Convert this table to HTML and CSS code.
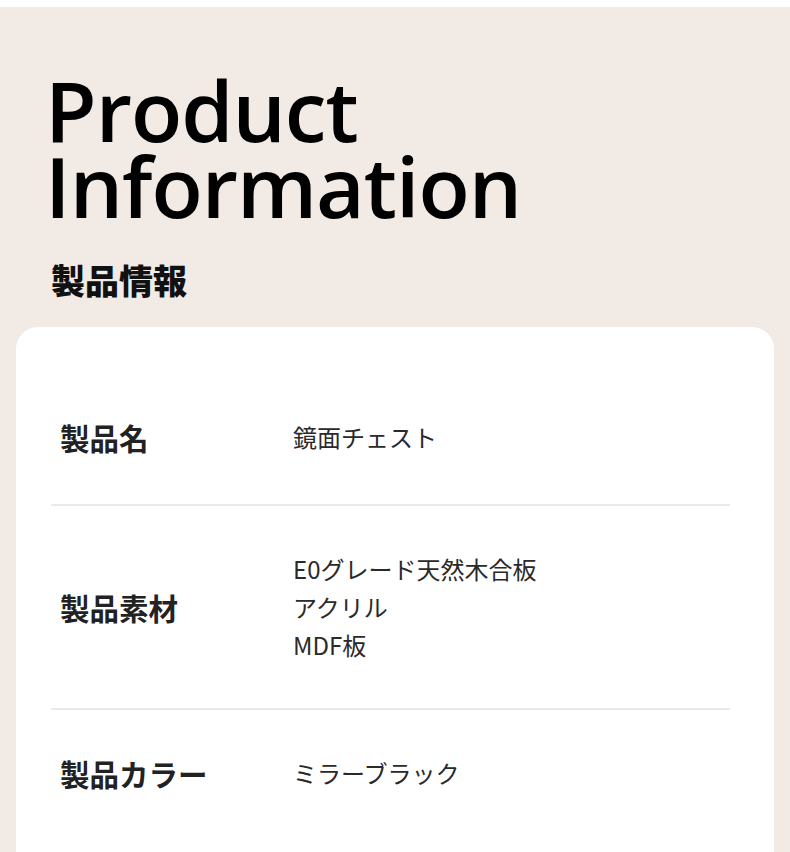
FILE: index.html
```html
<!DOCTYPE html>
<html lang="ja">
<head>
<meta charset="utf-8">
<link rel="stylesheet" href="styles.css">
</head>
<body>
<div class="page">
  <h1 class="title">Product<br>Information</h1>
  <h2 class="subtitle">製品情報</h2>
  <div class="card">
    <div class="row first">
      <div class="label">製品名</div>
      <div class="value">鏡面チェスト</div>
    </div>
    <div class="row">
      <div class="label">製品素材</div>
      <div class="value">E0グレード天然木合板<br>アクリル<br>MDF板</div>
    </div>
    <div class="row last">
      <div class="label">製品カラー</div>
      <div class="value">ミラーブラック</div>
    </div>
  </div>
</div>
</body>
</html>
```

FILE: styles.css
```css
html, body {
  margin: 0;
  padding: 0;
  background: #ffffff;
}
body {
  padding-top: 7px;
  font-family: "Noto Sans CJK JP", sans-serif;
}
.page {
  background: #f2eae5;
  height: 900px;
  padding: 65px 16px 0 16px;
  box-sizing: border-box;
}
.title {
  margin: 0 0 0 29px;
  font-family: "Open Sans", "Noto Sans", sans-serif;
  font-weight: 600;
  font-size: 84px;
  line-height: 76px;
  color: #000;
  letter-spacing: -1px;
}
.subtitle {
  margin: 34px 0 0 35px;
  font-family: "Noto Sans CJK JP", sans-serif;
  font-weight: 800;
  font-size: 34px;
  line-height: 44px;
  color: #111;
}
.card {
  margin-top: 25px;
  background: #ffffff;
  border-radius: 22px 22px 0 0;
  padding: 47px 44px 100px 35px;
}
.row {
  display: grid;
  grid-template-columns: 233px 1fr;
  align-items: center;
  padding: 44px 0 44px 9px;
  border-bottom: 2px solid #efe9e5;
}
.row.first {
  padding-bottom: 48px;
}
.row.last {
  border-bottom: none;
}
.label {
  font-weight: 700;
  font-size: 29.5px;
  line-height: 38px;
  color: #222;
}
.value {
  font-weight: 400;
  font-size: 24px;
  line-height: 38px;
  color: #2a2a2a;
}
```
